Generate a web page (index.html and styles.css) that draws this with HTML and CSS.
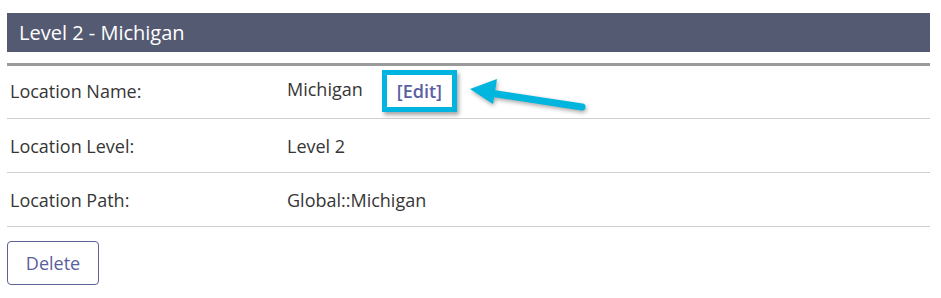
FILE: index.html
```html
<!DOCTYPE html>
<html>
<head>
<meta charset="utf-8">
<link rel="stylesheet" href="styles.css">
</head>
<body>
<div class="page">
  <div class="panel-title">Level 2 - Michigan</div>
  <div class="details">
    <div class="row row-first">
      <div class="label">Location Name:</div>
      <div class="value"><span class="name">Michigan</span><span class="highlight"><a class="edit" href="#">[Edit]</a></span></div>
    </div>
    <div class="row">
      <div class="label">Location Level:</div>
      <div class="value">Level 2</div>
    </div>
    <div class="row">
      <div class="label">Location Path:</div>
      <div class="value">Global::Michigan</div>
    </div>
  </div>
  <button class="btn-delete">Delete</button>
  <svg class="arrow" width="140" height="50" viewBox="460 75 140 50">
    <line x1="582" y1="107" x2="490" y2="93" stroke="#00b6de" stroke-width="7" stroke-linecap="round"/>
    <polygon points="470,89 497,79 493,104" fill="#00b6de"/>
  </svg>
</div>
</body>
</html>
```

FILE: styles.css
```css
html, body {
  margin: 0;
  padding: 0;
  background: #ffffff;
}
.page {
  position: relative;
  width: 923px;
  margin-left: 7px;
  padding-top: 13px;
  font-family: "Open Sans", "Liberation Sans", sans-serif;
  color: #363636;
}
.panel-title {
  height: 39px;
  background: #555a73;
  color: #ffffff;
  font-size: 20px;
  line-height: 39px;
  padding-left: 12px;
}
.details {
  margin-top: 11px;
  border-top: 3px solid #9a9a9a;
}
.row {
  display: grid;
  grid-template-columns: 280px 1fr;
  align-items: center;
  height: 53px;
  border-bottom: 1px solid #cfcfcf;
  font-size: 18px;
}
.row-first {
  height: 50px;
  padding-bottom: 2px;
}
.label {
  padding-left: 3px;
}
.value {
  display: flex;
  align-items: center;
}
.name {
  margin-bottom: 5px;
}
.highlight {
  display: inline-block;
  margin-left: 19px;
  border: 5px solid #00b4df;
  padding: 4px 10px;
  box-shadow: 2px 3px 4px rgba(0, 0, 0, 0.35);
  line-height: 24px;
}
.edit {
  color: #5a5ea3;
  font-size: 18px;
  font-weight: 600;
  text-decoration: none;
}
.btn-delete {
  margin-top: 14px;
  width: 92px;
  height: 44px;
  background: #ffffff;
  border: 1px solid #5d6193;
  border-radius: 4px;
  color: #5a5e9c;
  font-family: "Open Sans", "Liberation Sans", sans-serif;
  font-size: 18px;
  padding: 0;
}
.arrow {
  position: absolute;
  left: 453px;
  top: 75px;
  filter: drop-shadow(1px 2px 2px rgba(0, 0, 0, 0.35));
}
```
